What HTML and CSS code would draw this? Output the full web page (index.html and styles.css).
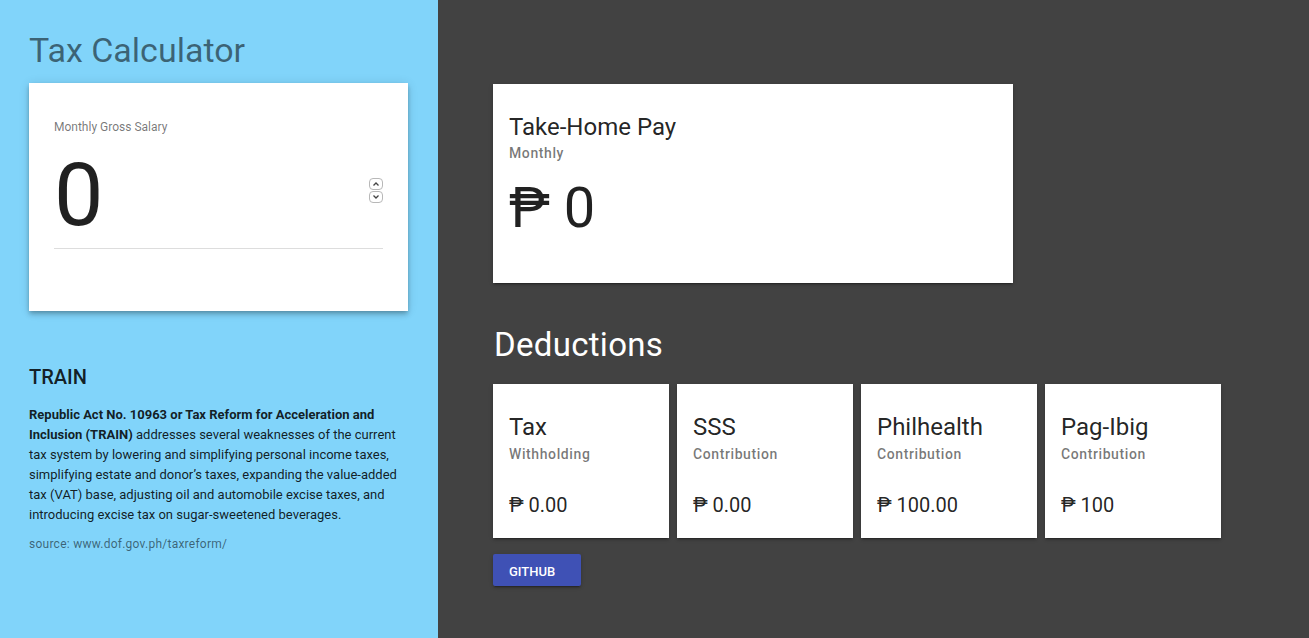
FILE: index.html
```html
<!DOCTYPE html>
<html lang="en">
<head>
<meta charset="utf-8">
<title>Tax Calculator</title>
<link rel="stylesheet" href="styles.css">
</head>
<body>
<div class="layout">
  <aside class="side">
    <h1 class="app-title">Tax Calculator</h1>
    <div class="card salary-card">
      <div class="field-label">Monthly Gross Salary</div>
      <div class="field-row">
        <div class="field-value">0</div>
        <div class="spinner">
          <span class="spin-btn"><svg width="8" height="6" viewBox="0 0 8 6"><path d="M1.5 4.5 L4 2 L6.5 4.5" fill="none" stroke="#444" stroke-width="1.3"/></svg></span>
          <span class="spin-btn"><svg width="8" height="6" viewBox="0 0 8 6"><path d="M1.5 1.5 L4 4 L6.5 1.5" fill="none" stroke="#444" stroke-width="1.3"/></svg></span>
        </div>
      </div>
    </div>
    <h2 class="train-title">TRAIN</h2>
    <p class="train-text"><strong>Republic Act No. 10963 or Tax Reform for Acceleration and Inclusion (TRAIN)</strong> addresses several weaknesses of the current tax system by lowering and simplifying personal income taxes, simplifying estate and donor’s taxes, expanding the value-added tax (VAT) base, adjusting oil and automobile excise taxes, and introducing excise tax on sugar-sweetened beverages.</p>
    <p class="source">source: www.dof.gov.ph/taxreform/</p>
  </aside>
  <main class="main">
    <div class="card pay-card">
      <div class="card-title">Take-Home Pay</div>
      <div class="card-sub">Monthly</div>
      <div class="pay-value">₱ 0</div>
    </div>
    <h2 class="section-title">Deductions</h2>
    <div class="deductions">
      <div class="card ded-card">
        <div class="card-title">Tax</div>
        <div class="card-sub">Withholding</div>
        <div class="ded-value">₱ 0.00</div>
      </div>
      <div class="card ded-card">
        <div class="card-title">SSS</div>
        <div class="card-sub">Contribution</div>
        <div class="ded-value">₱ 0.00</div>
      </div>
      <div class="card ded-card">
        <div class="card-title">Philhealth</div>
        <div class="card-sub">Contribution</div>
        <div class="ded-value">₱ 100.00</div>
      </div>
      <div class="card ded-card">
        <div class="card-title">Pag-Ibig</div>
        <div class="card-sub">Contribution</div>
        <div class="ded-value">₱ 100</div>
      </div>
    </div>
    <a class="btn" href="#">GITHUB</a>
  </main>
</div>
</body>
</html>
```

FILE: styles.css
```css
* { box-sizing: border-box; }
html, body { margin: 0; padding: 0; height: 100%; }
body {
  font-family: Roboto, "Noto Sans", "Liberation Sans", sans-serif;
  background: #424242;
  color: rgba(0,0,0,.87);
}
.layout {
  display: flex;
  min-height: 638px;
}
.side {
  width: 438px;
  flex: 0 0 438px;
  background: #81d4fa;
  padding: 30px 30px 0 29px;
}
.app-title {
  margin: 0 0 13px;
  font-size: 34px;
  line-height: 40px;
  font-weight: 400;
  color: rgba(0,0,0,.54);
}
.card {
  background: #fff;
  box-shadow: 0 2px 2px 0 rgba(0,0,0,.14), 0 3px 1px -2px rgba(0,0,0,.2), 0 1px 5px 0 rgba(0,0,0,.12);
}
.salary-card {
  width: 379px;
  height: 228px;
  padding: 36px 25px 0 25px;
  box-shadow: 0 2px 4px -1px rgba(0,0,0,.2), 0 4px 5px 0 rgba(0,0,0,.14), 0 1px 10px 0 rgba(0,0,0,.12);
}
.field-label {
  font-size: 12px;
  line-height: 16px;
  color: rgba(0,0,0,.54);
}
.field-row {
  margin-top: 16px;
  display: flex;
  justify-content: space-between;
  align-items: flex-start;
  padding-bottom: 9px;
  border-bottom: 1px solid #ddd;
}
.field-value {
  font-size: 88px;
  line-height: 88px;
  color: rgba(0,0,0,.87);
}
.spinner {
  margin-top: 27px;
  display: flex;
  flex-direction: column;
  gap: 1px;
}
.spin-btn {
  width: 14px;
  height: 12px;
  border: 1px solid #b8b8b8;
  border-radius: 4px;
  display: flex;
  align-items: center;
  justify-content: center;
  background: #fff;
}
.train-title {
  margin: 52px 0 0;
  font-size: 20px;
  line-height: 28px;
  font-weight: 500;
}
.train-text {
  margin: 14px 0 0;
  font-size: 13px;
  line-height: 20px;
}
.train-text strong { font-weight: 700; }
.source {
  margin: 11px 0 0;
  font-size: 12px;
  line-height: 16px;
  letter-spacing: .25px;
  color: rgba(0,0,0,.54);
}
.main {
  flex: 1;
  padding: 84px 0 0 55px;
}
.pay-card {
  width: 520px;
  height: 199px;
  padding: 27px 16px 0;
}
.card-title {
  font-size: 24px;
  line-height: 32px;
  color: rgba(0,0,0,.87);
}
.card-sub {
  font-size: 14px;
  line-height: 20px;
  font-weight: 500;
  letter-spacing: .6px;
  color: rgba(0,0,0,.54);
}
.pay-value {
  margin-top: 16px;
  font-size: 56px;
  line-height: 58px;
  color: rgba(0,0,0,.87);
}
.section-title {
  margin: 42px 0 19px 1px;
  font-size: 33px;
  line-height: 40px;
  font-weight: 400;
  letter-spacing: .3px;
  color: #fff;
}
.deductions {
  display: flex;
  gap: 8px;
}
.ded-card {
  width: 176px;
  height: 154px;
  padding: 27px 16px 0;
}
.ded-card .card-title { margin-bottom: 1px; }
.ded-value {
  margin-top: 27px;
  font-size: 20px;
  line-height: 28px;
  color: rgba(0,0,0,.87);
}
.btn {
  display: inline-flex;
  align-items: center;
  margin-top: 16px;
  min-width: 88px;
  height: 32px;
  padding: 3px 16px 0;
  background: #3f51b5;
  color: #fff;
  font-size: 13px;
  font-weight: 500;
  text-decoration: none;
  border-radius: 2px;
  box-shadow: 0 2px 2px 0 rgba(0,0,0,.14), 0 3px 1px -2px rgba(0,0,0,.2), 0 1px 5px 0 rgba(0,0,0,.12);
}
```
